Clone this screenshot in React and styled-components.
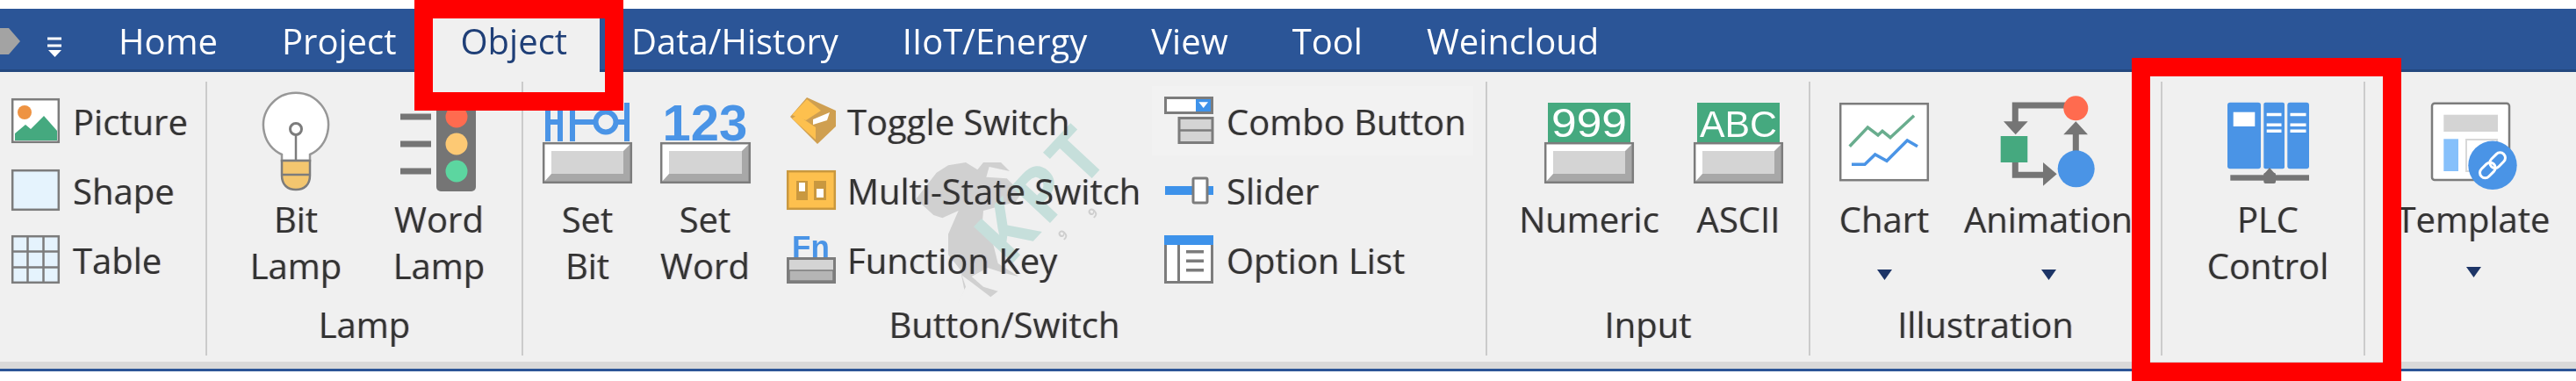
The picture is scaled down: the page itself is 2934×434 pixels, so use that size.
import React from "react";
import styled, { createGlobalStyle } from "styled-components";

const GlobalStyle = createGlobalStyle`
  html, body {
    margin: 0;
    background: #fff;
    font-family: "Open Sans", "Noto Sans", sans-serif;
  }
`;

const GRAY = "#7c7c7c";
const BLUE = "#4a94e6";
const GREEN = "#45a97f";
const GOLD = "#fdc04e";
const GOLD_DARK = "#c9983f";
const FACE = "#d4d4d4";
const PALE = "#e5f3fd";

const Page = styled.div`
  position: relative;
  width: 2934px;
  height: 434px;
  overflow: hidden;
`;

const Frame = styled.div`
  padding-top: 10px;
  filter: blur(0.7px);
`;

const TabBar = styled.div`
  display: flex;
  height: 72px;
  background: #2b5597;
  box-shadow: inset 0 -3px 0 #24487f;
`;

const QuickAccess = styled.div`
  width: 98.5px;
  flex: none;
  display: flex;
  align-items: flex-start;
`;

const Tab = styled.div`
  display: flex;
  align-items: center;
  padding: 0 36.5px;
  font-size: 40px;
  color: ${(p) => (p.$active ? "#1f3f77" : "#fff")};
  background: ${(p) => (p.$active ? "#f0f0f0" : "transparent")};
  box-shadow: ${(p) => (p.$active ? "0 3px 0 #f0f0f0" : "none")};
`;

const Ribbon = styled.div`
  position: relative;
  display: flex;
  height: 330px;
  box-sizing: border-box;
  padding: 11px 0 7px;
  background: #f0f0f0;
`;

const BottomEdge = styled.div`
  height: 8px;
  background: #d9d9d9;
  border-bottom: 3px solid #2b5597;
`;

const Group = styled.section`
  position: relative;
  z-index: 1;
  box-sizing: border-box;
  width: ${(p) => p.$width}px;
  display: flex;
  flex-direction: column;
  border-right: ${(p) => (p.$last ? "none" : "2px solid #cbcbcb")};
`;

const GroupBody = styled.div`
  height: 250px;
  flex: none;
  box-sizing: border-box;
  display: flex;
  gap: ${(p) => p.$gap || 0}px;
  padding: 10px 0 0 ${(p) => p.$pad || 0}px;
`;

const GroupLabel = styled.div`
  text-align: center;
  font-size: 40px;
  line-height: 53px;
  color: #333;
  text-shadow: -1px 0 rgba(210, 130, 40, 0.3), 1px 0 rgba(40, 90, 210, 0.3);
`;

const LargeButton = styled.div`
  width: ${(p) => p.$width}px;
  flex: none;
  display: flex;
  flex-direction: column;
  align-items: center;
`;

const IconSlot = styled.div`
  height: 120px;
  flex: none;
  display: flex;
  align-items: center;
  justify-content: center;
  svg {
    display: block;
    overflow: visible;
  }
`;

const ButtonText = styled.div`
  text-align: center;
  font-size: 40px;
  line-height: 53px;
  white-space: nowrap;
  color: #333;
  text-shadow: -1px 0 rgba(210, 130, 40, 0.3), 1px 0 rgba(40, 90, 210, 0.3);
`;

const Caret = styled.svg`
  display: block;
  flex: none;
  margin-top: ${(p) => p.$top}px;
`;

const ToolColumn = styled.div`
  box-sizing: border-box;
  width: ${(p) => p.$width}px;
  flex: none;
  margin-top: -10px;
  padding-top: 5px;
`;

const ToolRow = styled.div`
  height: 79px;
  box-sizing: border-box;
  display: flex;
  align-items: center;
  gap: ${(p) => p.$gap}px;
  padding-left: ${(p) => p.$pad}px;
  background: ${(p) => (p.$hover ? "#f2f2f2" : "transparent")};
`;

const ToolIcon = styled.div`
  width: ${(p) => p.$width}px;
  flex: none;
  svg {
    display: block;
    overflow: visible;
  }
`;

const ToolText = styled.span`
  padding-top: 2px;
  font-size: 40px;
  white-space: nowrap;
  color: #333;
  text-shadow: -1px 0 rgba(210, 130, 40, 0.3), 1px 0 rgba(40, 90, 210, 0.3);
`;

const Watermark = styled.div`
  position: absolute;
  left: 1030px;
  top: 48px;
  width: 240px;
  height: 230px;
`;

const WatermarkLetters = styled.div`
  position: absolute;
  left: 66px;
  top: 52px;
  font-size: 85px;
  line-height: 72px;
  font-weight: 700;
  letter-spacing: 6px;
  color: #c6dfdb;
  transform: rotate(-47deg);
`;

const WatermarkNine = styled.span`
  position: absolute;
  left: ${(p) => p.$left}px;
  top: ${(p) => p.$top}px;
  font-size: 15px;
  font-weight: 700;
  color: #cfcfcf;
  transform: rotate(-45deg);
`;

const Highlight = styled.div`
  position: absolute;
  z-index: 5;
  box-sizing: border-box;
  border: 21px solid #ff0000;
`;

const ObjectHighlight = styled(Highlight)`
  left: 472px;
  top: 0;
  width: 238px;
  height: 126px;
`;

const PlcHighlight = styled(Highlight)`
  left: 2428px;
  top: 66px;
  width: 307px;
  height: 368px;
`;

const PressButton = ({ x = 0, y = 0, w = 102, h = 47 }) => (
  <g>
    <rect x={x + 1} y={y + 1} width={w - 2} height={h - 2} fill="#fff" />
    <polygon
      points={`${x + w - 1},${y + 1} ${x + w - 1},${y + h - 1} ${x + 1},${y + h - 1} ${x + 10},${y + h - 11} ${x + w - 10},${y + h - 11} ${x + w - 10},${y + 10}`}
      fill="#a8a8a8"
    />
    <rect x={x + 10} y={y + 10} width={w - 20} height={h - 21} fill={FACE} />
    <rect x={x + 1.2} y={y + 1.2} width={w - 2.4} height={h - 2.4} fill="none" stroke={GRAY} strokeWidth="2.5" />
  </g>
);

const PictureIcon = () => (
  <svg width="55" height="51" viewBox="0 0 55 51">
    <rect x="1.2" y="1.2" width="52.6" height="48.6" fill="#fff" stroke={GRAY} strokeWidth="2.5" />
    <circle cx="15" cy="16" r="8" fill="#ee9342" />
    <polygon points="4,40 16,30 22,35 37,20 52,37 52,48 4,48" fill={GREEN} />
  </svg>
);

const ShapeIcon = () => (
  <svg width="55" height="47" viewBox="0 0 55 47">
    <rect x="1.2" y="1.2" width="52.6" height="44.6" fill={PALE} stroke={GRAY} strokeWidth="2.5" />
  </svg>
);

const TableIcon = () => (
  <svg width="55" height="55" viewBox="0 0 55 55">
    <rect x="1.2" y="1.2" width="52.6" height="52.6" fill={PALE} stroke={GRAY} strokeWidth="2.5" />
    <path d="M18.5 1V54M36.5 1V54M1 18.5H54M1 36.5H54" stroke={GRAY} strokeWidth="2.5" fill="none" />
  </svg>
);

const BulbIcon = () => (
  <svg width="80" height="115" viewBox="0 0 80 115">
    <path d="M24 77V70A37 37 0 1 1 56 70V77Z" fill="#fff" stroke="#979797" strokeWidth="2.5" />
    <circle cx="40" cy="41" r="6.5" fill="#fff" stroke={GRAY} strokeWidth="3" />
    <path d="M40 47V77" stroke={GRAY} strokeWidth="2.5" />
    <path d="M24 77H56V94C56 104 50 110 40 110C30 110 24 104 24 94Z" fill="#f3c66f" stroke={GRAY} strokeWidth="2.5" />
    <path d="M24 93H56" stroke={GRAY} strokeWidth="2.5" />
  </svg>
);

const TrafficIcon = () => (
  <svg width="88" height="110" viewBox="0 0 88 110">
    <rect x="41" y="0" width="45" height="110" rx="5" fill="#757575" />
    <circle cx="64" cy="25" r="12.5" fill="#ff6b4f" />
    <circle cx="64" cy="56" r="12.5" fill="#fdc974" />
    <circle cx="64" cy="87" r="12.5" fill="#5cd6a0" />
    <path d="M0 25H35M0 56H35M0 87H35" stroke="#757575" strokeWidth="7" />
  </svg>
);

const SetBitIcon = () => (
  <svg width="102" height="92" viewBox="0 0 102 92">
    <path
      d="M6 0V44M20 0V44M6 22H20M34 0V44M34 22H60M84 22H96M96 0V44"
      stroke={BLUE}
      strokeWidth="6"
      fill="none"
    />
    <circle cx="72" cy="22" r="11.5" stroke={BLUE} strokeWidth="6" fill="none" />
    <PressButton y={45} />
  </svg>
);

const SetWordIcon = () => (
  <svg width="103" height="92" viewBox="0 0 103 92">
    <text x="51" y="43" textAnchor="middle" fontFamily="Liberation Sans" fontWeight="700" fontSize="58" fill={BLUE}>
      123
    </text>
    <PressButton y={45} w={103} />
  </svg>
);

const DisplayIcon = ({ text, size, length }) => (
  <svg width="102" height="92" viewBox="0 0 102 92">
    <rect x="4" y="0" width="94" height="46" fill={GREEN} />
    <text
      x="51"
      y="39"
      textAnchor="middle"
      fontFamily="Liberation Sans"
      fontSize={size}
      fill="#fff"
      textLength={length}
      lengthAdjust="spacingAndGlyphs"
    >
      {text}
    </text>
    <PressButton y={45} />
  </svg>
);

const ToggleIcon = () => (
  <svg width="58" height="58" viewBox="0 0 58 58">
    <polygon points="23,2 56,17 56,35 35,55 4,24" fill="#cf9f50" />
    <polygon points="23,4 39,17 22,28 6,22" fill={GOLD} />
    <polygon points="6,26 33,50 33,36 12,22" fill={GOLD} />
    <polygon points="30,27 49,19 46,28 30,33" fill="#fff" />
  </svg>
);

const DipIcon = () => (
  <svg width="56" height="45" viewBox="0 0 56 45">
    <rect x="1.2" y="1.2" width="53.6" height="42.6" fill={GOLD} stroke={GOLD_DARK} strokeWidth="2.5" />
    <rect x="11" y="12" width="13" height="22" fill={GOLD_DARK} />
    <rect x="14" y="14" width="7" height="10" fill="#fff" />
    <rect x="31" y="12" width="14" height="22" fill={GOLD_DARK} />
    <rect x="34" y="21" width="8" height="10" fill="#fff" />
  </svg>
);

const FnIcon = () => (
  <svg width="56" height="55" viewBox="0 0 56 55">
    <text x="6" y="25" fontFamily="Liberation Sans" fontWeight="700" fontSize="35" fill={BLUE}>
      Fn
    </text>
    <rect x="1.5" y="26.5" width="53" height="27" fill={FACE} stroke={GRAY} strokeWidth="3" />
    <rect x="3" y="40" width="50" height="12" fill="#b5b5b5" stroke={GRAY} strokeWidth="1.5" />
  </svg>
);

const ComboIcon = () => (
  <svg width="56" height="55" viewBox="0 3 56 55">
    <rect x="1.5" y="4.5" width="53" height="17" fill="#fff" stroke={GRAY} strokeWidth="3" />
    <rect x="36" y="6" width="17" height="14" fill="#3d92ea" />
    <polygon points="39.3,9.3 50,9.3 44.7,16" fill="#fff" />
    <rect x="17" y="27.5" width="38" height="28" fill={FACE} stroke={GRAY} strokeWidth="3" />
    <path d="M17 41.5H55" stroke={GRAY} strokeWidth="2.5" />
  </svg>
);

const SliderIcon = () => (
  <svg width="56" height="32" viewBox="0 2 56 32">
    <rect x="1" y="13" width="55" height="10" fill="#3d92ea" />
    <rect x="33" y="4" width="16" height="28" rx="1.5" fill="#fff" stroke={GRAY} strokeWidth="3" />
  </svg>
);

const OptionIcon = () => (
  <svg width="56" height="55" viewBox="0 2 56 55">
    <rect x="1.5" y="3.5" width="53" height="52" fill="#fff" stroke={GRAY} strokeWidth="3" />
    <rect x="0" y="2" width="56" height="11" fill="#3d92ea" />
    <path d="M16.5 13V56" stroke={GRAY} strokeWidth="3" />
    <path d="M25 20.7H45M25 31.3H45M25 41.7H45" stroke={GRAY} strokeWidth="3.5" />
  </svg>
);

const ChartIcon = () => (
  <svg width="102" height="92" viewBox="0 0 102 92">
    <rect x="1.2" y="1.2" width="99.6" height="87" fill="#fff" stroke={GRAY} strokeWidth="2.5" />
    <polyline points="11.7,49.7 32.3,28 44,37 49,32.3 58,39.7 85,14.7" fill="none" stroke="#69ad8e" strokeWidth="3.5" />
    <polyline points="14,70.3 29,70.3 40.7,59 54,66.3 77.3,43 89,49.7" fill="none" stroke={BLUE} strokeWidth="3.5" />
  </svg>
);

const AnimationIcon = () => (
  <svg width="112" height="112" viewBox="0 0 112 112">
    <path d="M75 13H18.3V33M18.3 78V92.3H52M87.3 66V46" fill="none" stroke="#757575" strokeWidth="7" />
    <polygon points="5,31.3 32.7,31.3 18.7,46.3" fill="#757575" />
    <polygon points="50,78 50,104.7 65.7,91.3" fill="#757575" />
    <polygon points="73.3,46.3 101,46.3 87.3,31.3" fill="#757575" />
    <rect x="1.7" y="48" width="30.6" height="30" fill={GREEN} />
    <circle cx="87.3" cy="16.3" r="14" fill="#ff6b4f" />
    <circle cx="87.7" cy="85.3" r="21" fill={BLUE} />
  </svg>
);

const PlcIcon = () => (
  <svg width="95" height="96" viewBox="0 0 95 96">
    <rect x="1" y="1.7" width="38" height="75.6" rx="3" fill={BLUE} />
    <rect x="42.3" y="1.7" width="23.7" height="75.6" rx="2" fill={BLUE} />
    <rect x="69.3" y="1.7" width="24.7" height="75.6" rx="3" fill={BLUE} />
    <rect x="7.7" y="12.7" width="24.6" height="16.3" fill="#fff" />
    <path d="M45.7 15.5H62.5M45.7 27.3H62.5M45.7 34.3H62.5M72.5 15.5H90.5M72.5 27.3H90.5M72.5 34.3H90.5" stroke="#fff" strokeWidth="3.5" />
    <path d="M49 76L56 84H42Z" fill="#757575" />
    <rect x="4.3" y="84.3" width="89.7" height="6.4" fill="#757575" />
    <rect x="42.3" y="81.7" width="13.7" height="12.3" rx="2" fill="#757575" />
  </svg>
);

const TemplateIcon = () => (
  <svg width="105" height="116" viewBox="0 -10 105 116">
    <rect x="5" y="2.7" width="88" height="87.3" rx="3" fill="#fff" stroke={GRAY} strokeWidth="2.5" />
    <rect x="18.3" y="15.7" width="61.7" height="19.3" fill={FACE} />
    <rect x="18.3" y="43.3" width="16.7" height="36.7" fill="#86c0fb" />
    <rect x="44" y="44" width="35" height="36" fill="#fff" stroke="#d8d8d8" strokeWidth="2" />
    <circle cx="74" cy="73.3" r="27.7" fill={BLUE} />
    <g transform="rotate(-45 74 73.3)" fill="none" stroke="#fff" strokeWidth="3">
      <rect x="56" y="67.3" width="20" height="12" rx="6" />
      <rect x="72" y="67.3" width="20" height="12" rx="6" />
    </g>
  </svg>
);

const HorseMark = () => (
  <svg width="240" height="230" viewBox="0 0 720 690">
    <path
      d="M180 650L210 590L190 530L150 480L150 410L185 330L130 355L100 345L40 290L110 200L150 175L210 165L250 190L270 165L330 165L360 195L290 180L280 215L350 220L400 270L380 300L270 330L265 390L300 430L320 510L390 555L330 540L285 525L230 555L270 590L320 605L295 625L230 575L195 550L205 600Z"
      fill="#d0d0d0"
    />
  </svg>
);

const DownCaret = ({ top }) => (
  <Caret $top={top} width="17" height="12" viewBox="0 0 17 12">
    <polygon points="0,0 17,0 8.5,12" fill="#1d3567" />
  </Caret>
);

const leftTools = [
  { label: "Picture", icon: <PictureIcon /> },
  { label: "Shape", icon: <ShapeIcon /> },
  { label: "Table", icon: <TableIcon /> },
];

const switchTools = [
  { label: "Toggle Switch", icon: <ToggleIcon /> },
  { label: "Multi-State Switch", icon: <DipIcon /> },
  { label: "Function Key", icon: <FnIcon /> },
];

const widgetTools = [
  { label: "Combo Button", icon: <ComboIcon />, hover: true },
  { label: "Slider", icon: <SliderIcon /> },
  { label: "Option List", icon: <OptionIcon /> },
];

const tabs = ["Home", "Project", "Object", "Data/History", "IIoT/Energy", "View", "Tool", "Weincloud"];

const Tools = ({ items, width, pad, iconWidth, gap }) => (
  <ToolColumn $width={width}>
    {items.map((item) => (
      <ToolRow key={item.label} $gap={gap} $pad={pad} $hover={item.hover}>
        <ToolIcon $width={iconWidth}>{item.icon}</ToolIcon>
        <ToolText>{item.label}</ToolText>
      </ToolRow>
    ))}
  </ToolColumn>
);

const Big = ({ width, icon, children, caretTop }) => (
  <LargeButton $width={width}>
    <IconSlot>{icon}</IconSlot>
    <ButtonText>{children}</ButtonText>
    {caretTop && <DownCaret top={caretTop} />}
  </LargeButton>
);

export default function App() {
  return (
    <Page>
      <GlobalStyle />
      <Frame>
        <TabBar>
          <QuickAccess>
            <svg width="72" height="72" viewBox="0 0 72 72">
              <polygon points="0,22 10,22 23,37 10,52 0,52" fill="#a3a3a3" />
              <path d="M54 34H70M54 42H70" stroke="#fff" strokeWidth="3" />
              <polygon points="55,47 70,47 62.5,55" fill="#fff" />
            </svg>
          </QuickAccess>
          {tabs.map((tab) => (
            <Tab key={tab} $active={tab === "Object"}>
              {tab}
            </Tab>
          ))}
        </TabBar>
        <Ribbon>
          <Watermark>
            <HorseMark />
            <WatermarkLetters>KPT</WatermarkLetters>
            <WatermarkNine $left={176} $top={127}>9</WatermarkNine>
            <WatermarkNine $left={210} $top={102}>9</WatermarkNine>
          </Watermark>
          <Group $width={236}>
            <GroupBody>
              <Tools items={leftTools} width={234} pad={13} iconWidth={55} gap={15} />
            </GroupBody>
          </Group>
          <Group $width={360}>
            <GroupBody $pad={31}>
              <Big width={140} icon={<BulbIcon />}>Bit<br />Lamp</Big>
              <Big width={186} icon={<TrafficIcon />}>Word<br />Lamp</Big>
            </GroupBody>
            <GroupLabel>Lamp</GroupLabel>
          </Group>
          <Group $width={1098}>
            <GroupBody $pad={6}>
              <Big width={134} icon={<SetBitIcon />}>Set<br />Bit</Big>
              <Big width={134} icon={<SetWordIcon />}>Set<br />Word</Big>
              <Tools items={switchTools} width={442} pad={26} iconWidth={56} gap={13} />
              <Tools items={widgetTools} width={366} pad={14} iconWidth={56} gap={15} />
            </GroupBody>
            <GroupLabel>Button/Switch</GroupLabel>
          </Group>
          <Group $width={368}>
            <GroupBody $pad={41} $gap={20}>
              <Big width={150} icon={<DisplayIcon text="999" size={46} length={86} />}>Numeric</Big>
              <Big width={150} icon={<DisplayIcon text="ABC" size={42} length={88} />}>ASCII</Big>
            </GroupBody>
            <GroupLabel>Input</GroupLabel>
          </Group>
          <Group $width={401}>
            <GroupBody $pad={24} $gap={27}>
              <Big width={120} icon={<ChartIcon />} caretTop={31}>Chart</Big>
              <Big width={200} icon={<AnimationIcon />} caretTop={31}>Animation</Big>
            </GroupBody>
            <GroupLabel>Illustration</GroupLabel>
          </Group>
          <Group $width={231}>
            <GroupBody $pad={20}>
              <Big width={200} icon={<PlcIcon />}>PLC<br />Control</Big>
            </GroupBody>
          </Group>
          <Group $width={240} $last>
            <GroupBody $pad={23}>
              <Big width={200} icon={<TemplateIcon />} caretTop={28}>Template</Big>
            </GroupBody>
          </Group>
        </Ribbon>
        <BottomEdge />
      </Frame>
      <ObjectHighlight />
      <PlcHighlight />
    </Page>
  );
}
